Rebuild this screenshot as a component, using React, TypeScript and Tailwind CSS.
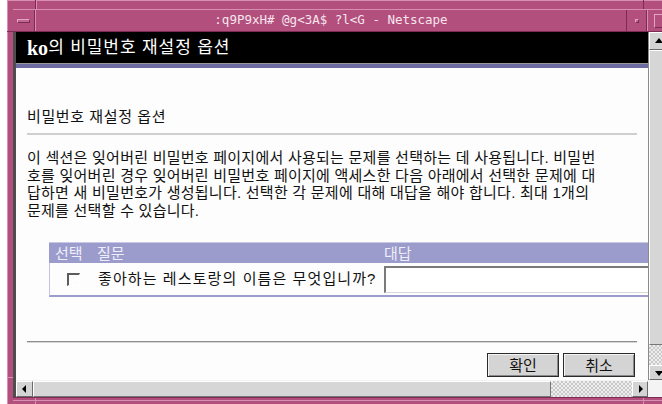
import type { ReactNode } from "react";

const kr = "font-['Liberation_Sans','Noto_Sans_CJK_KR',sans-serif]";

type Dir = "up" | "down" | "left" | "right";

const arrowPoints: Record<Dir, string> = {
  up: "2,8 6,3 10,8",
  down: "2,4 6,9 10,4",
  left: "7,2 3,6 7,10",
  right: "5,2 9,6 5,10",
};

function ArrowButton({ dir, className }: { dir: Dir; className: string }) {
  return (
    <div
      className={`flex items-center justify-center bg-[#d4d4d4] border border-t-white border-l-white border-b-[#6b6b6b] border-r-[#6b6b6b] ${className}`}
    >
      <svg width="12" height="12" viewBox="0 0 12 12">
        <polygon points={arrowPoints[dir]} fill="#000" />
      </svg>
    </div>
  );
}

function Trough({ className }: { className: string }) {
  return (
    <div
      className={`bg-[repeating-conic-gradient(#c9c9c9_0%_25%,#eeeeee_0%_50%)] bg-[length:4px_4px] ${className}`}
    />
  );
}

function Button({ children }: { children: ReactNode }) {
  return (
    <button className="w-[72px] h-[24px] border border-[#2a2a2a] bg-[#d4d4d4] shadow-[inset_1px_1px_0_#f4f4f4,inset_-1px_-1px_0_#8a8a8a] text-[15px] text-[#111] leading-none flex items-center justify-center">
      {children}
    </button>
  );
}

export default function App() {
  return (
    <div className="relative w-[662px] h-[404px] overflow-hidden bg-white">
      {/* window frame */}
      <div className="ml-[7px] w-[680px] h-[404px] flex flex-col bg-[#b24f7d] border-l border-t border-[#d88eb1] pt-[8px] pl-[5px]">
        {/* title bar */}
        <div className="h-[23px] flex border-t border-[#d88eb1] border-b border-b-[#7c2c54]">
          <div className="w-[22px] shrink-0 flex items-center justify-center border-r border-[#7c2c54]">
            <div className="w-[13px] h-[4px] bg-[#c06890] border-t border-l border-[#e4a4c2] border-b border-r border-b-[#7c2c54] border-r-[#7c2c54]" />
          </div>
          <div className="flex-1 flex items-center justify-center border-l border-[#d88eb1] font-['DejaVu_Sans_Mono',monospace] text-[12.5px] text-[#f6e6ee] whitespace-pre">
            :q9P9xH# @g&lt;3A$ ?l&lt;G - Netscape
          </div>
          <div className="w-[21px] shrink-0 flex items-center justify-center border-l border-[#7c2c54] border-r border-r-[#7c2c54]">
            <div className="w-[4px] h-[4px] bg-[#c06890] border-t border-l border-[#e4a4c2] border-b border-r border-b-[#7c2c54] border-r-[#7c2c54]" />
          </div>
          <div className="w-[40px] shrink-0 flex items-center pl-[6px] border-l border-[#d88eb1]">
            <div className="w-[14px] h-[14px] border border-t-[#e4a4c2] border-l-[#e4a4c2] border-b-[#7c2c54] border-r-[#7c2c54]" />
          </div>
        </div>

        {/* client area */}
        <div className="grid grid-cols-[632px_20px] grid-rows-[348px_17px] border-l-[3px] border-[#4e4e4e]">
          {/* page */}
          <div className="flex flex-col overflow-hidden bg-[#fdfdfd]">
            <div className="h-[32px] shrink-0 bg-black flex items-center pl-[11px] text-white border-b border-[#9a9a9a]">
              <span className="font-['Liberation_Serif',serif] font-bold text-[20px] leading-none">ko</span>
              <span className={`${kr} text-[17px] tracking-[0.9px] leading-none`}>의 비밀번호 재설정 옵션</span>
            </div>
            <div className="h-[4px] shrink-0 bg-[#6c6ca2]" />

            <div className={`flex flex-col px-[11px] ${kr} text-[15px] text-[#111]`}>
              <div className="mt-[40px] leading-[18px] tracking-[0.6px]">비밀번호 재설정 옵션</div>
              <div className="mt-[7px] h-[2px] bg-[#cfcfcf]" />
              <p className="mt-[14px] leading-[17.5px] tracking-[0.25px] whitespace-nowrap">
                이 섹션은 잊어버린 비밀번호 페이지에서 사용되는 문제를 선택하는 데 사용됩니다. 비밀번
                <br />
                호를 잊어버린 경우 잊어버린 비밀번호 페이지에 액세스한 다음 아래에서 선택한 문제에 대
                <br />
                답하면 새 비밀번호가 생성됩니다. 선택한 각 문제에 대해 대답을 해야 합니다. 최대 1개의
                <br />
                문제를 선택할 수 있습니다.
              </p>

              {/* question table */}
              <div className="mt-[23px] ml-[22px] w-[640px] shrink-0">
                <div className="h-[21px] grid grid-cols-[48px_286px_1fr] items-center bg-[#9c9ccc] text-[#eeeef8] border-t border-[#c8c8e4]">
                  <span className="pl-[6px]">선택</span>
                  <span>질문</span>
                  <span className="pl-[1px]">대답</span>
                </div>
                <div className="h-[34px] grid grid-cols-[48px_286px_1fr] items-center border-l border-[#c4c4e0] border-b-2 border-b-[#9c9ccc]">
                  <div className="pl-[17px]">
                    <div className="w-[13px] h-[13px] border-t-2 border-l-2 border-[#5c5c5c] border-b border-r border-b-white border-r-white" />
                  </div>
                  <span className="whitespace-nowrap tracking-[1.1px]">좋아하는 레스토랑의 이름은 무엇입니까?</span>
                  <div className="h-[27px] bg-white border-t-2 border-l-2 border-[#7a7a7a] border-b border-r border-b-[#d8d8d8] border-r-[#d8d8d8]" />
                </div>
              </div>

              <div className="mt-[44px] h-[2px] bg-[#8e8e8e] border-b border-[#d6d6d6]" />
              <div className="mt-[10px] flex justify-end gap-[4px] pr-[2px]">
                <Button>확인</Button>
                <Button>취소</Button>
              </div>
            </div>
          </div>

          {/* vertical scrollbar */}
          <div className="flex flex-col border-l border-[#8a8a8a]">
            <ArrowButton dir="up" className="h-[18px] shrink-0" />
            <div className="h-[295px] shrink-0 bg-[#d6d6d6] border border-t-white border-l-white border-b-[#777] border-r-[#777]" />
            <Trough className="flex-1" />
            <ArrowButton dir="down" className="h-[15px] shrink-0" />
          </div>

          {/* horizontal scrollbar */}
          <div className="flex border-t border-[#f2f2f2]">
            <ArrowButton dir="left" className="w-[17px] shrink-0" />
            <div className="w-[518px] shrink-0 bg-[#d6d6d6] border border-t-white border-l-white border-b-[#777] border-r-[#777]" />
            <Trough className="flex-1" />
            <ArrowButton dir="right" className="w-[16px] shrink-0" />
          </div>
          <div className="bg-[#f4f4f4]" />
        </div>

        {/* bottom edge of the frame */}
        <div className="flex-1 border-t border-[#7c2c54]">
          <div className="mt-[2px] h-px bg-[#d88eb1]" />
        </div>
      </div>

      {/* frame corner notches */}
      <div className="absolute left-[35px] top-0 w-px h-[9px] bg-[#7c2c54]" />
      <div className="absolute left-[36px] top-0 w-px h-[9px] bg-[#d88eb1]" />
      <div className="absolute left-[643px] top-0 w-px h-[9px] bg-[#7c2c54]" />
      <div className="absolute left-[7px] top-[31px] w-[6px] h-px bg-[#7c2c54]" />
      <div className="absolute left-[7px] top-[377px] w-[6px] h-px bg-[#d88eb1]" />
      <div className="absolute left-[35px] top-[398px] w-px h-[6px] bg-[#d88eb1]" />
      <div className="absolute left-[643px] top-[398px] w-px h-[6px] bg-[#d88eb1]" />
    </div>
  );
}
